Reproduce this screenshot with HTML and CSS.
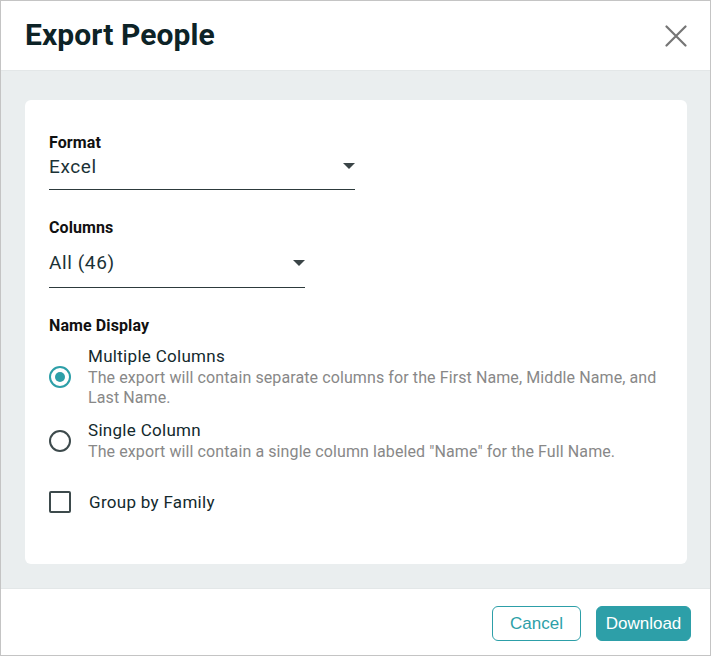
FILE: index.html
```html
<!DOCTYPE html>
<html>
<head>
    <title>Export People</title>
    <link rel="stylesheet" href="styles.css">
</head>
<body>
    <div class="dialog">
        <div class="dialog-header">
            <h1>Export People</h1>
            <button class="close-btn" aria-label="Close">
                <svg width="22" height="22" viewBox="0 0 22 22">
                    <path d="M1.5 1.5 L20.5 20.5 M20.5 1.5 L1.5 20.5" stroke="#757575" stroke-width="2.2" stroke-linecap="round" fill="none"/>
                </svg>
            </button>
        </div>
        <div class="dialog-body">
            <div class="card">
                <div class="field">
                    <div class="field-label">Format</div>
                    <div class="select select-format">
                        <span>Excel</span>
                        <span class="caret"></span>
                    </div>
                </div>
                <div class="field">
                    <div class="field-label">Columns</div>
                    <div class="select select-columns">
                        <span>All (46)</span>
                        <span class="caret"></span>
                    </div>
                </div>
                <div class="field-label">Name Display</div>
                <div class="option">
                    <span class="radio checked"></span>
                    <div class="option-text">
                        <div class="option-title">Multiple Columns</div>
                        <div class="option-desc">The export will contain separate columns for the First Name, Middle Name, and Last Name.</div>
                    </div>
                </div>
                <div class="option">
                    <span class="radio"></span>
                    <div class="option-text">
                        <div class="option-title">Single Column</div>
                        <div class="option-desc">The export will contain a single column labeled "Name" for the Full Name.</div>
                    </div>
                </div>
                <div class="check-row">
                    <span class="checkbox"></span>
                    <span class="option-title">Group by Family</span>
                </div>
            </div>
        </div>
        <div class="dialog-footer">
            <button class="btn btn-outline">Cancel</button>
            <button class="btn btn-primary">Download</button>
        </div>
    </div>
</body>
</html>
```

FILE: styles.css
```css
html, body {
    margin: 0;
    padding: 0;
}

body {
    font-family: Roboto, "Liberation Sans", sans-serif;
    background: white;
}

.dialog {
    width: 711px;
    height: 656px;
    box-sizing: border-box;
    border: 1px solid #c4c4c4;
    display: flex;
    flex-direction: column;
    background: white;
}

.dialog-header {
    height: 69px;
    display: flex;
    align-items: center;
    justify-content: space-between;
    padding: 0 23px 0 24px;
    border-bottom: 1px solid #e3e7e8;
}

h1 {
    margin: -3px 0 0 0;
    font-size: 30px;
    font-weight: bold;
    color: #0d2327;
    letter-spacing: 0.1px;
}

.close-btn {
    background: none;
    border: none;
    padding: 0;
    width: 22px;
    height: 22px;
    cursor: pointer;
    margin-top: 1px;
}

.dialog-body {
    flex: 1;
    background: #eaeeef;
    padding: 29px 23px 24px 24px;
}

.card {
    background: white;
    border-radius: 6px;
    height: 100%;
    box-sizing: border-box;
    padding: 33px 24px 0 24px;
}

.field {
    margin-bottom: 28px;
}

.field-label {
    font-size: 16px;
    font-weight: bold;
    color: #111;
    line-height: 20px;
    letter-spacing: 0.1px;
}

.select {
    display: flex;
    justify-content: space-between;
    align-items: center;
    font-size: 19px;
    color: #1b3236;
    border-bottom: 1px solid #2d3a3c;
    letter-spacing: 0.6px;
    box-sizing: border-box;
    padding-bottom: 6px;
}

.select-format {
    width: 306px;
    height: 41px;
    margin-top: -4px;
}

.select-columns {
    width: 256px;
    height: 44px;
    margin-top: 6px;
}

.caret {
    width: 0;
    height: 0;
    border-left: 6px solid transparent;
    border-right: 6px solid transparent;
    border-top: 6px solid #3b4547;
}

.option {
    display: flex;
    align-items: center;
    gap: 17px;
    margin-top: 10px;
}

.option + .option {
    margin-top: 12px;
}

.radio {
    width: 18px;
    height: 18px;
    border: 2px solid #3d4a4c;
    border-radius: 50%;
    flex-shrink: 0;
    position: relative;
}

.radio.checked {
    border-color: #2d9fa8;
}

.radio.checked::after {
    content: "";
    position: absolute;
    left: 4px;
    top: 4px;
    width: 10px;
    height: 10px;
    border-radius: 50%;
    background: #2d9fa8;
}

.option-title {
    font-size: 17px;
    color: #13292d;
    line-height: 21px;
    letter-spacing: 0.3px;
}

.option-desc {
    font-size: 16px;
    color: #888;
    line-height: 20px;
    margin-top: 1px;
    letter-spacing: 0.1px;
}

.check-row {
    display: flex;
    align-items: center;
    gap: 18px;
    margin-top: 29px;
}

.checkbox {
    width: 18px;
    height: 18px;
    border: 2px solid #3d4a4c;
    border-radius: 2px;
    flex-shrink: 0;
}

.dialog-footer {
    height: 67px;
    border-top: 1px solid #e3e7e8;
    display: flex;
    justify-content: flex-end;
    align-items: center;
    gap: 15px;
    padding: 3px 19px 0 0;
    box-sizing: border-box;
}

.btn {
    font-family: "Liberation Sans", Arial, sans-serif;
    font-size: 17px;
    height: 35px;
    border-radius: 6px;
    cursor: pointer;
}

.btn-outline {
    width: 89px;
    background: white;
    border: 1px solid #2d9fa8;
    color: #2d9fa8;
}

.btn-primary {
    width: 95px;
    background: #2d9fa8;
    border: 1px solid #2d9fa8;
    color: white;
}
```
